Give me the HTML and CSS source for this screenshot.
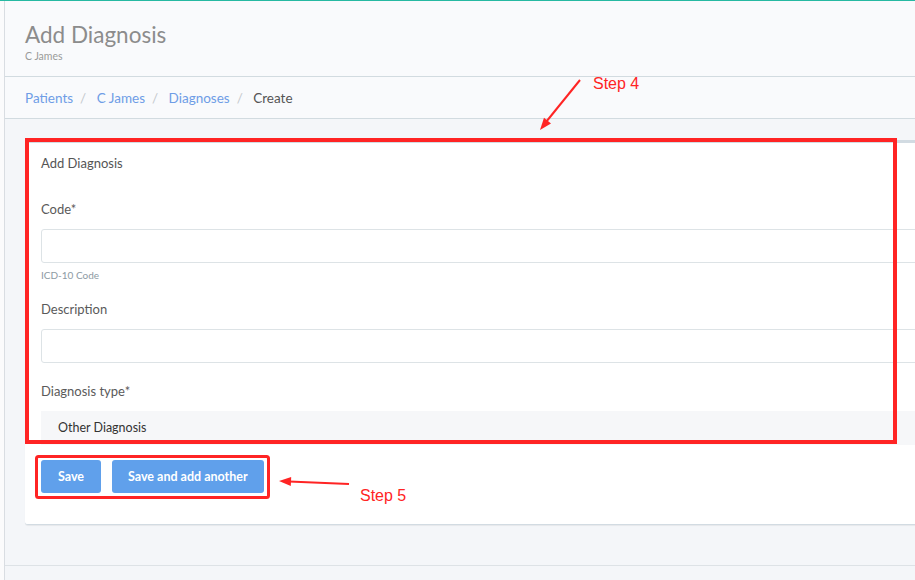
FILE: index.html
```html
<!DOCTYPE html>
<html lang="en">
<head>
  <meta charset="UTF-8" />
  <title>Add Diagnosis</title>
  <link rel="stylesheet" href="styles.css">
</head>
<body>

  <div class="page">
    <div class="page-header">
      <h1>Add Diagnosis</h1>
      <div class="subtitle">C James</div>
    </div>

    <div class="crumbs">
      <a href="#">Patients</a><span class="sep">/</span>
      <a href="#">C James</a><span class="sep">/</span>
      <a href="#">Diagnoses</a><span class="sep">/</span>
      <span class="current">Create</span>
    </div>

    <div class="content">
      <div class="box">
        <div class="box-title">Add Diagnosis</div>

        <div class="box-body">
          <div class="field">
            <label>Code*</label>
            <input type="text" class="input">
            <div class="help">ICD-10 Code</div>
          </div>

          <div class="field">
            <label>Description</label>
            <input type="text" class="input">
          </div>

          <div class="field">
            <label>Diagnosis type*</label>
            <div class="select">Other Diagnosis</div>
          </div>
        </div>

        <div class="box-footer">
          <button class="btn">Save</button>
          <button class="btn">Save and add another</button>
        </div>
      </div>
    </div>

    <div class="page-footer"></div>
  </div>

  <!-- tutorial annotations drawn over the page -->
  <svg class="marks" width="915" height="580" viewBox="0 0 915 580">
    <rect x="27" y="140" width="868" height="302" fill="none" stroke="#ff2424" stroke-width="4"/>
    <rect x="36.5" y="456.5" width="232" height="41" rx="2" fill="none" stroke="#ff2424" stroke-width="3"/>

    <line x1="580" y1="80" x2="546" y2="122" stroke="#ff2424" stroke-width="2"/>
    <polygon points="540,130 551,123.4 544,117.8" fill="#ff2424"/>
    <text x="593" y="89" class="step">Step 4</text>

    <line x1="349" y1="484" x2="289" y2="481.5" stroke="#ff2424" stroke-width="2"/>
    <polygon points="279,481 291.2,477 290.8,486" fill="#ff2424"/>
    <text x="360" y="501" class="step">Step 5</text>
  </svg>

</body>
</html>
```

FILE: styles.css
```css
html, body {
  overflow: hidden;
}

body {
  margin: 0;
  background: #fbfbfc;
  font-family: 'Lato', 'Open Sans', sans-serif;
  border-top: 1px solid #26b9a2;
  height: 579px;
  position: relative;
}

.page {
  margin-left: 4px;
  border-left: 1px solid #d9dde2;
  background: #f4f6f9;
  height: 100%;
}

.page-header {
  background: #f9fafc;
  height: 76px;
  padding: 0 20px;
  border-bottom: 1px solid #d2dbe0;
  box-sizing: border-box;
}

.page-header h1 {
  margin: 0;
  padding-top: 19px;
  font-size: 22.5px;
  font-weight: normal;
  line-height: 30px;
  color: #8c8c8c;
}

.subtitle {
  font-size: 10.5px;
  color: #9a9a9a;
  line-height: 14px;
  margin-top: -1px;
}

.crumbs {
  background: #f9fafc;
  height: 42px;
  line-height: 42px;
  padding: 0 20px;
  border-bottom: 1px solid #d2dbe0;
  box-sizing: border-box;
  font-size: 13.5px;
}

.crumbs a {
  color: #6e9de6;
  text-decoration: none;
}

.crumbs .sep {
  color: #c4c8cc;
  padding: 0 7px;
}

.crumbs .current {
  color: #555;
}

.content {
  padding: 21px 20px 0;
  width: 1100px;
}

.box {
  background: #fff;
  border-top: 3px solid #d2dbe2;
  border-bottom: 1px solid #d2dbe2;
  border-radius: 3px;
  box-shadow: 0 1px 1px rgba(0, 0, 0, 0.06);
  height: 385px;
  box-sizing: border-box;
}

.box-title {
  padding: 11px 16px 0;
  font-size: 13px;
  line-height: 18px;
  color: #555;
  height: 41px;
  box-sizing: border-box;
}

.box-body {
  padding: 16px 0 0 16px;
}

.field {
  margin-bottom: 19px;
}

.field:last-child {
  margin-bottom: 15px;
}

.field label {
  display: block;
  font-size: 13px;
  line-height: 18px;
  color: #5a5a5a;
  margin-bottom: 11px;
}

.input {
  display: block;
  width: 100%;
  height: 34px;
  box-sizing: border-box;
  border: 1px solid #dde3e6;
  border-radius: 3px;
  background: #fff;
  margin: 0;
}

.help {
  font-size: 10px;
  color: #8d9aa3;
  margin-top: 6px;
  line-height: 12px;
}

.select {
  background: #f6f7f9;
  height: 34px;
  line-height: 34px;
  padding-left: 17px;
  font-size: 12.5px;
  color: #333;
}

.box-footer {
  padding: 0 16px;
  display: flex;
  gap: 11px;
}

.btn {
  height: 33px;
  padding: 0 16px;
  background: #60a0eb;
  color: #fff;
  border: none;
  border-radius: 3px;
  font-family: 'Lato', 'Open Sans', sans-serif;
  font-size: 12.5px;
  font-weight: bold;
}

.btn:first-child {
  width: 60px;
  padding: 0;
}

.page-footer {
  margin-top: 40px;
  border-top: 1px solid #dde2e6;
  height: 20px;
}

.marks {
  position: absolute;
  top: -1px;
  left: 0;
  pointer-events: none;
}

.step {
  font-family: 'Liberation Sans', Arial, sans-serif;
  font-size: 16px;
  fill: #ff2424;
}
```
